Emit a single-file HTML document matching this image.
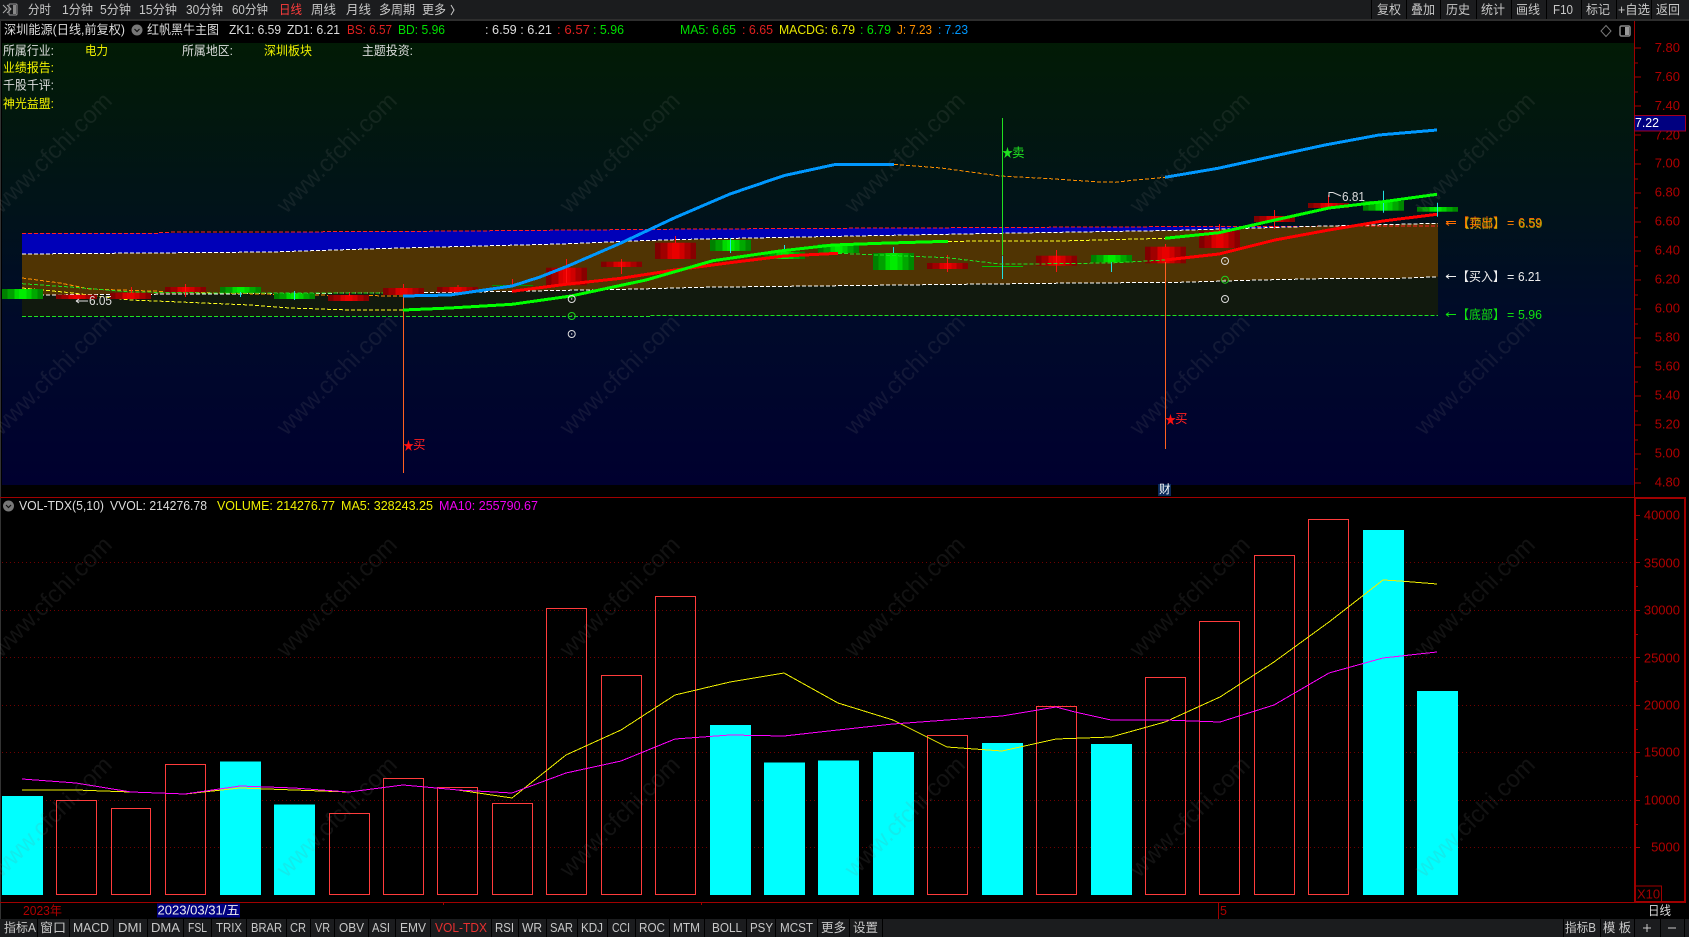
<!DOCTYPE html>
<html><head><meta charset="utf-8"><style>
html,body{margin:0;padding:0;background:#000;width:1689px;height:937px;overflow:hidden}
svg{display:block}
text{font-family:"Liberation Sans","Noto Sans CJK SC",sans-serif;font-size:12.5px;dominant-baseline:central;fill:#ddd}
.t{fill:#c8c8c8}
.ax{fill:#b00000;font-size:13px;text-anchor:end}
.wm{font-size:24px;fill:#808080;opacity:.14;text-anchor:middle}
.th{fill:none;stroke-width:3;shape-rendering:crispEdges}
.d{fill:none;stroke-width:1;stroke-dasharray:4 2;shape-rendering:crispEdges}
.g{stroke:#700000;stroke-width:1;stroke-dasharray:1 3;shape-rendering:crispEdges}
.rb{fill:none;stroke:#ff3c3c;stroke-width:1;shape-rendering:crispEdges}
.cb{fill:#00ffff}
.ma{fill:none;stroke-width:1;shape-rendering:crispEdges}
</style></head><body>
<svg width="1689" height="937" viewBox="0 0 1689 937" xmlns="http://www.w3.org/2000/svg">
<defs>
<linearGradient id="bg" x1="0" y1="0" x2="0" y2="1">
<stop offset="0" stop-color="#021b05"/><stop offset=".38" stop-color="#01131a"/><stop offset=".63" stop-color="#000a2a"/><stop offset="1" stop-color="#00002f"/>
</linearGradient>
<linearGradient id="r"><stop offset="0" stop-color="#800000"/><stop offset=".14" stop-color="#800000"/><stop offset=".14" stop-color="#a00000"/><stop offset=".3" stop-color="#a00000"/><stop offset=".3" stop-color="#d80000"/><stop offset=".42" stop-color="#d80000"/><stop offset=".42" stop-color="#e80000"/><stop offset=".6" stop-color="#e80000"/><stop offset=".6" stop-color="#d00000"/><stop offset=".72" stop-color="#d00000"/><stop offset=".72" stop-color="#a80000"/><stop offset=".86" stop-color="#a80000"/><stop offset=".86" stop-color="#880000"/><stop offset="1" stop-color="#880000"/></linearGradient>
<linearGradient id="v"><stop offset="0" stop-color="#008000"/><stop offset=".14" stop-color="#008000"/><stop offset=".14" stop-color="#00a000"/><stop offset=".3" stop-color="#00a000"/><stop offset=".3" stop-color="#00d800"/><stop offset=".42" stop-color="#00d800"/><stop offset=".42" stop-color="#00ec00"/><stop offset=".6" stop-color="#00ec00"/><stop offset=".6" stop-color="#00d000"/><stop offset=".72" stop-color="#00d000"/><stop offset=".72" stop-color="#00a800"/><stop offset=".86" stop-color="#00a800"/><stop offset=".86" stop-color="#008800"/><stop offset="1" stop-color="#008800"/></linearGradient>
</defs>
<rect width="1689" height="937" fill="#000"/>
<!-- top toolbar -->
<rect width="1689" height="19" fill="#1b1c1e"/>
<rect y="19" width="1689" height="2" fill="#2e2e2e"/>
<path d="M3 5l4 4-4 4M7 5l4 4-4 4" fill="none" stroke="#aaa" stroke-width="1"/>
<rect x="9" y="4" width="8" height="11" rx="1" fill="none" stroke="#999"/><rect x="13" y="5" width="3" height="9" fill="#888"/>
<text class="t" x="28" y="10" textLength="23" lengthAdjust="spacingAndGlyphs">分时</text>
<text class="t" x="62" y="10" textLength="31" lengthAdjust="spacingAndGlyphs">1分钟</text>
<text class="t" x="100" y="10" textLength="31" lengthAdjust="spacingAndGlyphs">5分钟</text>
<text class="t" x="139" y="10" textLength="38" lengthAdjust="spacingAndGlyphs">15分钟</text>
<text class="t" x="186" y="10" textLength="37" lengthAdjust="spacingAndGlyphs">30分钟</text>
<text class="t" x="232" y="10" textLength="36" lengthAdjust="spacingAndGlyphs">60分钟</text>
<text x="279" y="10" textLength="23" lengthAdjust="spacingAndGlyphs" style="fill:#ff3c3c">日线</text>
<text class="t" x="311" y="10" textLength="25" lengthAdjust="spacingAndGlyphs">周线</text>
<text class="t" x="346" y="10" textLength="25" lengthAdjust="spacingAndGlyphs">月线</text>
<text class="t" x="379" y="10" textLength="36" lengthAdjust="spacingAndGlyphs">多周期</text>
<text class="t" x="422" y="10" textLength="24" lengthAdjust="spacingAndGlyphs">更多</text>
<path d="M451 5l3 5-3 5" fill="none" stroke="#c8c8c8"/>
<g stroke="#000" stroke-width="1"><path d="M1371.500 0V19M1406.500 0V19M1440.500 0V19M1476.500 0V19M1511.500 0V19M1546.500 0V19M1581.500 0V19M1616.500 0V19M1651.500 0V19"/></g>
<text class="t" x="1377" y="10" textLength="24" lengthAdjust="spacingAndGlyphs">复权</text>
<text class="t" x="1411" y="10" textLength="24" lengthAdjust="spacingAndGlyphs">叠加</text>
<text class="t" x="1446" y="10" textLength="24" lengthAdjust="spacingAndGlyphs">历史</text>
<text class="t" x="1481" y="10" textLength="24" lengthAdjust="spacingAndGlyphs">统计</text>
<text class="t" x="1516" y="10" textLength="24" lengthAdjust="spacingAndGlyphs">画线</text>
<text class="t" x="1553" y="10" textLength="20" lengthAdjust="spacingAndGlyphs">F10</text>
<text class="t" x="1586" y="10" textLength="24" lengthAdjust="spacingAndGlyphs">标记</text>
<text class="t" x="1618" y="10" textLength="32" lengthAdjust="spacingAndGlyphs">+自选</text>
<text class="t" x="1656" y="10" textLength="24" lengthAdjust="spacingAndGlyphs">返回</text>
<!-- header -->
<text x="4" y="30" textLength="121" lengthAdjust="spacingAndGlyphs">深圳能源(日线,前复权)</text>
<circle cx="137" cy="30" r="5.500" fill="#777"/><path d="M134.500 29l2.500 2.500 2.500-2.500" fill="none" stroke="#111" stroke-width="1.200"/>
<text x="147" y="30" textLength="72" lengthAdjust="spacingAndGlyphs">红帆黑牛主图</text>
<text x="229" y="30" textLength="52" lengthAdjust="spacingAndGlyphs">ZK1: 6.59</text>
<text x="287" y="30" textLength="53" lengthAdjust="spacingAndGlyphs">ZD1: 6.21</text>
<text x="347" y="30" textLength="45" lengthAdjust="spacingAndGlyphs" style="fill:#e02020">BS: 6.57</text>
<text x="398" y="30" textLength="47" lengthAdjust="spacingAndGlyphs" style="fill:#00e000">BD: 5.96</text>
<text x="485" y="30" textLength="67" lengthAdjust="spacingAndGlyphs">: 6.59 : 6.21</text>
<text x="557" y="30" textLength="33" lengthAdjust="spacingAndGlyphs" style="fill:#e02020">: 6.57</text>
<text x="593" y="30" textLength="31" lengthAdjust="spacingAndGlyphs" style="fill:#00e000">: 5.96</text>
<text x="680" y="30" textLength="56" lengthAdjust="spacingAndGlyphs" style="fill:#00e000">MA5: 6.65</text>
<text x="742" y="30" textLength="31" lengthAdjust="spacingAndGlyphs" style="fill:#e02020">: 6.65</text>
<text x="779" y="30" textLength="76" lengthAdjust="spacingAndGlyphs" style="fill:#e8e800">MACDG: 6.79</text>
<text x="860" y="30" textLength="31" lengthAdjust="spacingAndGlyphs" style="fill:#00e000">: 6.79</text>
<text x="897" y="30" textLength="35" lengthAdjust="spacingAndGlyphs" style="fill:#ff9000">J: 7.23</text>
<text x="938" y="30" textLength="30" lengthAdjust="spacingAndGlyphs" style="fill:#0098ff">: 7.23</text>
<path d="M1606 25.500l5 5.500-5 5.500-5-5.500z" fill="none" stroke="#777"/>
<rect x="1620" y="26" width="10" height="10" rx="1.500" fill="none" stroke="#888" stroke-width="1.500"/><rect x="1625" y="27" width="4" height="8" fill="#999"/>
<!-- main bg -->
<rect x="2" y="43" width="1632" height="442" fill="url(#bg)"/>
<rect x="0" y="21" width="1" height="916" fill="#333"/>
<!-- zones -->
<polygon fill="#11190e" points="22,295 433,292.700 640,289 700,287.300 1050,283.300 1180,282.300 1260,280 1340,278.300 1400,278.300 1438,276.700 1438,315.300 22,316.700"/>
<polygon fill="#503403" points="22,254 270,252 400,248 560,244 640,240.700 700,239 870,235.700 1000,233.300 1180,230.300 1300,226.700 1438,223.300 1438,276.700 1400,278.300 1340,278.300 1260,280 1180,282.300 1050,283.300 700,287.300 640,289 433,292.700 22,295"/>
<polygon fill="#0000b8" points="22,233.300 270,233 400,231 700,229 1000,227.500 1200,226.500 1300,226 1300,226.700 1180,230.300 1000,233.300 870,235.700 700,239 640,240.700 560,244 400,248 270,252 22,254"/>
<polyline class="d" stroke="#ff2020" points="22,233.300 158,233.300 158,232.300 400,231.500 700,229 1000,227.500 1200,226.500 1438,226"/>
<polyline class="d" stroke="#fff" points="22,254 270,252 400,248 560,244 640,240.700 700,239 870,235.700 1000,233.300 1180,230.300 1300,226.700 1438,223.300"/>
<polyline class="d" stroke="#fff" points="22,295 433,292.700 640,289 700,287.300 1050,283.300 1180,282.300 1260,280 1340,278.300 1400,278.300 1438,276.700"/>
<polyline class="d" stroke="#20e020" points="22,316.700 650,316.700 650,315.300 1438,315.300"/>
<!-- left dashed -->
<polyline class="d" stroke="#ff9000" points="22,278 60,283 90,289 180,292 300,295 403,296"/>
<polyline class="d" stroke="#20e020" points="22,283.700 70,287 130,292 220,293 403,293"/>
<polyline class="d" stroke="#ffff20" points="22,288 70,292.700 130,300 180,302 250,305 290,308 350,310 403,310"/>
<!-- candles -->
<g fill="url(#r)">
<rect x="56" y="294.700" width="41" height="4.300"/><rect x="110" y="292.700" width="41" height="6.300"/><rect x="165" y="287" width="41" height="5"/><rect x="328" y="295" width="41" height="6"/><rect x="383" y="288" width="41" height="7"/><rect x="437" y="287" width="41" height="5.300"/>
<rect x="546" y="267.700" width="41" height="17.600"/><rect x="601" y="261.700" width="41" height="5.300"/><rect x="655" y="242.700" width="41" height="16.300"/>
<rect x="927" y="263" width="41" height="6"/><rect x="1036" y="255.700" width="41" height="10"/><rect x="1145" y="246.700" width="41" height="16.600"/><rect x="1199" y="230.700" width="41" height="17.300"/><rect x="1254" y="216" width="41" height="6"/><rect x="1308" y="203" width="41" height="5"/>
</g>
<g fill="url(#v)">
<rect x="2" y="289" width="41" height="10"/><rect x="220" y="287" width="41" height="5.700"/><rect x="274" y="293.300" width="41" height="5.700"/>
<rect x="710" y="240" width="41" height="11"/><rect x="764" y="251.700" width="41" height="7.300"/><rect x="818" y="244" width="41" height="9"/><rect x="873" y="253" width="41" height="17"/><rect x="1091" y="255" width="41" height="7.300"/><rect x="1363" y="201" width="41" height="9.700"/><rect x="1417" y="207" width="41" height="4.700"/>
</g>
<rect x="492" y="285" width="41" height="1" fill="#009000"/><rect x="982" y="266" width="41" height="1" fill="#00c000"/>
<g stroke="#ff1010" stroke-width="1">
<path d="M131.500 287V293M185.500 284V297M349.500 293V296M403.500 284V288M458 285V287M512.500 279V285M566.500 259V285M621.500 259V274M675.500 236V243M947.500 255V272M1056.500 250V272M1165.500 244V247M1219.500 224V231M1274.500 210V229M1328.500 195V208"/>
</g>
<g stroke="#20e0e0" stroke-width="1">
<path d="M240.500 292V297M294.500 291V300M730.500 238V253M784.500 245V252M893.500 247V253M1002.500 255.700V279M1111.500 262V272M1383.500 190.700V212.700M1437.500 202.700V216.700"/>
</g>
<!-- thin dashed connectors -->
<polyline class="d" stroke="#ff9000" points="894,164.300 941,168 1000,176 1050,178.700 1095,181.700 1115,182.300 1135,180 1165,177.300"/>
<polyline class="d" stroke="#ffff20" points="948,241.300 1060,241 1165,238.300"/>
<polyline class="d" stroke="#20e020" points="838,253.300 947,257.700 1000,264 1056,263.700 1110,263 1165,260"/>
<!-- signal lines -->
<path d="M403.500 296V473M1165.500 262V449" stroke="#ff6020" stroke-width="1" fill="none"/>
<path d="M1002.500 118V255" stroke="#20e020" stroke-width="1" fill="none"/>
<!-- thick lines -->
<polyline class="th" stroke="#0098ff" points="403,296 450,295 512,286 540,277 568,266 621,243 675,217.600 730,194 784,175.600 836,164.300 894,164.300"/>
<polyline class="th" stroke="#0098ff" points="1165,177.300 1218,168.300 1271,156.700 1325,145 1379,135 1437,130"/>
<polyline class="th" stroke="#ff0000" points="512,291.300 566,284.300 621,278.300 675,270 730,262.700 784,256 838,253.300"/>
<polyline class="th" stroke="#00ff00" points="403,310 450,308 512,304.300 571,296 646,280 713,260.700 780,251 833,245 880,243.300 948,241.300"/>
<polyline class="th" stroke="#ff0000" points="1165,260 1219,254 1275,240 1329,230 1383,221 1437,214.300"/>
<polyline class="th" stroke="#00ff00" points="1165,238.300 1219,232.700 1275,220 1329,208 1383,201.700 1437,194.300"/>
<!-- circles -->
<g fill="none" stroke-width="1">
<circle cx="571.700" cy="299" r="3.500" stroke="#ddd"/><circle cx="571.700" cy="316" r="3.500" stroke="#20d020"/><circle cx="571.700" cy="334" r="3.500" stroke="#ddd"/>
<circle cx="1225" cy="261" r="3.500" stroke="#ddd"/><circle cx="1225" cy="279.700" r="3.500" stroke="#20d020"/><circle cx="1225" cy="299" r="3.500" stroke="#ddd"/>
</g>
<g fill="#ddd"><circle cx="571.700" cy="299" r=".7"/><circle cx="571.700" cy="334" r=".7"/><circle cx="1225" cy="261" r=".7"/><circle cx="1225" cy="299" r=".7"/><circle cx="571.700" cy="316" r=".7" style="fill:#20d020"/><circle cx="1225" cy="279.700" r=".7" style="fill:#20d020"/></g>
<!-- labels in chart -->
<path d="M76 301H88M76 301l3-2M76 301l3 2" fill="none" stroke="#ddd"/>
<text x="89" y="301" textLength="23" lengthAdjust="spacingAndGlyphs">6.05</text>
<path d="M1329 197V192.500H1333L1341 196" fill="none" stroke="#ddd"/>
<text x="1342" y="197" textLength="23" lengthAdjust="spacingAndGlyphs">6.81</text>
<text x="403" y="446" textLength="11" lengthAdjust="spacingAndGlyphs" style="fill:#ff1010">★</text>
<text x="413" y="445" style="fill:#ff2020;font-size:12.500px">买</text>
<text x="1165" y="420" textLength="11" lengthAdjust="spacingAndGlyphs" style="fill:#ff1010">★</text>
<text x="1175" y="419" style="fill:#ff2020;font-size:12.500px">买</text>
<text x="1002" y="153" textLength="11" lengthAdjust="spacingAndGlyphs" style="fill:#20e020">★</text>
<text x="1012" y="153" style="fill:#20e020;font-size:12.500px">卖</text>
<!-- right zone labels -->
<path d="M1446 223.500H1456M1446 223.500l3-2M1446 223.500l3 2M1446 221.500H1456" fill="none" stroke="#ff7000"/>
<text x="1457" y="223" textLength="48" lengthAdjust="spacingAndGlyphs" style="fill:#ff5a00">【卖出】</text>
<text x="1458" y="224" textLength="47" lengthAdjust="spacingAndGlyphs" style="fill:#e0c000;opacity:.75">【顶部】</text>
<text x="1507" y="223" style="fill:#ff8000">=</text>
<text x="1518" y="223" textLength="24" lengthAdjust="spacingAndGlyphs" style="fill:#ff6000">6.59</text>
<text x="1518.500" y="224" textLength="24" lengthAdjust="spacingAndGlyphs" style="fill:#d0d000;opacity:.7">6.59</text>
<path d="M1446 276.500H1456M1446 276.500l3-2M1446 276.500l3 2" fill="none" stroke="#eee"/>
<text x="1457" y="277" textLength="48" lengthAdjust="spacingAndGlyphs" style="fill:#eee">【买入】</text>
<text x="1507" y="277" style="fill:#eee">=</text>
<text x="1518" y="277" textLength="23" lengthAdjust="spacingAndGlyphs" style="fill:#eee">6.21</text>
<path d="M1446 314.500H1456M1446 314.500l3-2M1446 314.500l3 2" fill="none" stroke="#10e010"/>
<text x="1457" y="315" textLength="48" lengthAdjust="spacingAndGlyphs" style="fill:#10e010">【底部】</text>
<text x="1507" y="315" style="fill:#10e010">=</text>
<text x="1518" y="315" textLength="24" lengthAdjust="spacingAndGlyphs" style="fill:#10e010">5.96</text>
<!-- info rows -->
<text x="3" y="51" textLength="51" lengthAdjust="spacingAndGlyphs">所属行业:</text>
<text x="85" y="51" textLength="23" lengthAdjust="spacingAndGlyphs" style="fill:#f0f000">电力</text>
<text x="182" y="51" textLength="51" lengthAdjust="spacingAndGlyphs">所属地区:</text>
<text x="264" y="51" textLength="48" lengthAdjust="spacingAndGlyphs" style="fill:#f0f000">深圳板块</text>
<text x="362" y="51" textLength="51" lengthAdjust="spacingAndGlyphs">主题投资:</text>
<text x="3" y="68" textLength="51" lengthAdjust="spacingAndGlyphs" style="fill:#f0f000">业绩报告:</text>
<text x="3" y="85.500" textLength="51" lengthAdjust="spacingAndGlyphs">千股千评:</text>
<text x="3" y="104" textLength="51" lengthAdjust="spacingAndGlyphs" style="fill:#f0f000">神光益盟:</text>
<!-- right axis main -->
<rect x="1634" y="21" width="1" height="477" fill="#a00000"/>
<g stroke="#a00000" stroke-width="1"><path d="M1635 48h6M1635 63h3M1635 77h6M1635 92h3M1635 106h6M1635 135h6M1635 150h3M1635 164h6M1635 179h3M1635 193h6M1635 208h3M1635 222h6M1635 237h3M1635 251h6M1635 266h3M1635 280h6M1635 295h3M1635 309h6M1635 324h3M1635 338h6M1635 353h3M1635 367h6M1635 382h3M1635 396h6M1635 411h3M1635 425h6M1635 440h3M1635 454h6M1635 469h3M1635 483h6"/></g>
<text class="ax" x="1680" y="47.500">7.80</text><text class="ax" x="1680" y="76.500">7.60</text><text class="ax" x="1680" y="105.500">7.40</text><text class="ax" x="1680" y="135">7.20</text><text class="ax" x="1680" y="163">7.00</text><text class="ax" x="1680" y="192">6.80</text><text class="ax" x="1680" y="221">6.60</text><text class="ax" x="1680" y="250">6.40</text><text class="ax" x="1680" y="279">6.20</text><text class="ax" x="1680" y="308">6.00</text><text class="ax" x="1680" y="337">5.80</text><text class="ax" x="1680" y="366">5.60</text><text class="ax" x="1680" y="395">5.40</text><text class="ax" x="1680" y="424">5.20</text><text class="ax" x="1680" y="453">5.00</text><text class="ax" x="1680" y="482">4.80</text>
<rect x="1634.500" y="115.500" width="51" height="15.500" fill="#000080" stroke="#a00020"/>
<text x="1635" y="123" textLength="24" lengthAdjust="spacingAndGlyphs" style="fill:#fff">7.22</text>
<!-- 财 -->
<rect x="1158" y="484" width="13" height="12" fill="#0a2a5a"/>
<text x="1159" y="490" style="fill:#fff;font-size:11.500px">财</text>
<!-- vol panel -->
<rect x="0" y="497" width="1635" height="1" fill="#a00000"/>
<g class="g"><path d="M2 562.500H1634M2 610.500H1634M2 657.500H1634M2 705.500H1634M2 752.500H1634M2 800.500H1634M2 847.500H1634"/></g>
<circle cx="8.500" cy="506" r="5.500" fill="#777"/><path d="M6 505l2.500 2.500 2.500-2.500" fill="none" stroke="#111" stroke-width="1.200"/>
<text x="19" y="506" textLength="85" lengthAdjust="spacingAndGlyphs">VOL-TDX(5,10)</text>
<text x="110" y="506" textLength="97" lengthAdjust="spacingAndGlyphs">VVOL: 214276.78</text>
<text x="217" y="506" textLength="118" lengthAdjust="spacingAndGlyphs" style="fill:#f0f000">VOLUME: 214276.77</text>
<text x="341" y="506" textLength="92" lengthAdjust="spacingAndGlyphs" style="fill:#f0f000">MA5: 328243.25</text>
<text x="439" y="506" textLength="99" lengthAdjust="spacingAndGlyphs" style="fill:#f000f0">MA10: 255790.67</text>
<!-- vol bars -->
<rect class="cb" x="2" y="796" width="41" height="99"/>
<rect class="rb" x="56.500" y="800.500" width="40" height="94"/>
<rect class="rb" x="111.500" y="808.500" width="39" height="86"/>
<rect class="rb" x="165.500" y="764.500" width="40" height="130"/>
<rect class="cb" x="220" y="761.500" width="41" height="133.500"/>
<rect class="cb" x="274" y="804.500" width="41" height="90.500"/>
<rect class="rb" x="329.500" y="813.500" width="40" height="81"/>
<rect class="rb" x="383.500" y="778.500" width="40" height="116"/>
<rect class="rb" x="437.500" y="787.500" width="40" height="107"/>
<rect class="rb" x="492.500" y="803.500" width="40" height="91"/>
<rect class="rb" x="546.500" y="608.500" width="40" height="286"/>
<rect class="rb" x="601.500" y="675.500" width="40" height="219"/>
<rect class="rb" x="655.500" y="596.500" width="40" height="298"/>
<rect class="cb" x="710" y="725" width="41" height="170"/>
<rect class="cb" x="764" y="762.500" width="41" height="132.500"/>
<rect class="cb" x="818" y="760.500" width="41" height="134.500"/>
<rect class="cb" x="873" y="752" width="41" height="143"/>
<rect class="rb" x="927.500" y="735.500" width="40" height="159"/>
<rect class="cb" x="982" y="743" width="41" height="152"/>
<rect class="rb" x="1036.500" y="706.500" width="40" height="188"/>
<rect class="cb" x="1091" y="744" width="41" height="151"/>
<rect class="rb" x="1145.500" y="677.500" width="40" height="217"/>
<rect class="rb" x="1199.500" y="621.500" width="40" height="273"/>
<rect class="rb" x="1254.500" y="555.500" width="40" height="339"/>
<rect class="rb" x="1308.500" y="519.500" width="40" height="375"/>
<rect class="cb" x="1363" y="530" width="41" height="365"/>
<rect class="cb" x="1417" y="691" width="41" height="204"/>
<!-- MA lines -->
<polyline class="ma" stroke="#f0f000" points="22,790 76,790 131,792 185,794 240,788 294,790 349,792 403,785 458,790 512,798 566,755 621,730 675,695 730,682 784,673 838,703 893,720 947,747 1002,751 1056,739 1111,737 1165,722 1220,697 1274,662 1329,622 1383,580 1400,581 1437,584"/>
<polyline class="ma" stroke="#ff00ff" points="22,779 76,783 131,792 185,794 240,786 294,788 349,792 403,785 458,790 512,793 566,773 621,761 675,739 730,735 784,736 838,730 893,724 947,720 1002,716 1056,707 1075,712 1111,720 1165,720 1220,722 1274,705 1329,673 1383,658 1437,652"/>
<!-- vol axis -->
<rect x="1635" y="498" width="50" height="404" fill="none" stroke="#a00000" stroke-width="2"/>
<g stroke="#a00000"><path d="M1636 515.500h4M1636 539.500h2M1636 562.500h4M1636 586.500h2M1636 610.500h4M1636 634.500h2M1636 657.500h4M1636 681.500h2M1636 705.500h4M1636 729.500h2M1636 752.500h4M1636 776.500h2M1636 800.500h4M1636 824.500h2M1636 847.500h4"/></g>
<text class="ax" x="1680" y="515">40000</text><text class="ax" x="1680" y="563">35000</text><text class="ax" x="1680" y="610">30000</text><text class="ax" x="1680" y="658">25000</text><text class="ax" x="1680" y="705">20000</text><text class="ax" x="1680" y="752">15000</text><text class="ax" x="1680" y="800">10000</text><text class="ax" x="1680" y="847">5000</text>
<rect x="1635.500" y="886" width="26" height="16" fill="none" stroke="#a00000"/>
<text x="1637" y="894" style="fill:#a00000;font-size:13px">X10</text>
<!-- watermark -->
<g>
<text class="wm" transform="translate(52,153) rotate(-45)">www.cfchi.com</text><text class="wm" transform="translate(337,153) rotate(-45)">www.cfchi.com</text><text class="wm" transform="translate(620,153) rotate(-45)">www.cfchi.com</text><text class="wm" transform="translate(905,153) rotate(-45)">www.cfchi.com</text><text class="wm" transform="translate(1190,153) rotate(-45)">www.cfchi.com</text><text class="wm" transform="translate(1475,153) rotate(-45)">www.cfchi.com</text>
<text class="wm" transform="translate(52,375) rotate(-45)">www.cfchi.com</text><text class="wm" transform="translate(337,375) rotate(-45)">www.cfchi.com</text><text class="wm" transform="translate(620,375) rotate(-45)">www.cfchi.com</text><text class="wm" transform="translate(905,375) rotate(-45)">www.cfchi.com</text><text class="wm" transform="translate(1190,375) rotate(-45)">www.cfchi.com</text><text class="wm" transform="translate(1475,375) rotate(-45)">www.cfchi.com</text>
<text class="wm" transform="translate(52,597) rotate(-45)">www.cfchi.com</text><text class="wm" transform="translate(337,597) rotate(-45)">www.cfchi.com</text><text class="wm" transform="translate(620,597) rotate(-45)">www.cfchi.com</text><text class="wm" transform="translate(905,597) rotate(-45)">www.cfchi.com</text><text class="wm" transform="translate(1190,597) rotate(-45)">www.cfchi.com</text><text class="wm" transform="translate(1475,597) rotate(-45)">www.cfchi.com</text>
<text class="wm" transform="translate(52,817) rotate(-45)">www.cfchi.com</text><text class="wm" transform="translate(337,817) rotate(-45)">www.cfchi.com</text><text class="wm" transform="translate(620,817) rotate(-45)">www.cfchi.com</text><text class="wm" transform="translate(905,817) rotate(-45)">www.cfchi.com</text><text class="wm" transform="translate(1190,817) rotate(-45)">www.cfchi.com</text><text class="wm" transform="translate(1475,817) rotate(-45)">www.cfchi.com</text>
</g>
<!-- date row -->
<rect x="0" y="902" width="1635" height="1" fill="#a00000"/>
<text x="23" y="911" textLength="39" lengthAdjust="spacingAndGlyphs" style="fill:#b00000">2023年</text>
<rect x="157" y="903.500" width="83" height="14" fill="#000080"/>
<text x="157.500" y="910.500" textLength="82" lengthAdjust="spacingAndGlyphs" style="fill:#eee">2023/03/31/五</text>
<path d="M1218.500 902V919" stroke="#a00000"/>
<text x="1220" y="911" style="fill:#b00000">5</text>
<path d="M443.500 903v2M701.500 903v2" stroke="#a00000"/>
<text x="1648" y="911" textLength="23" lengthAdjust="spacingAndGlyphs">日线</text>
<!-- bottom bar -->
<rect x="0" y="919" width="1689" height="18" fill="#1b1c1e"/>
<path d="M37.500 919V937M69.500 919V937M113.500 919V937M147.500 919V937M183.500 919V937M211.500 919V937M246.500 919V937M286.500 919V937M310.500 919V937M334.500 919V937M368.500 919V937M395.500 919V937M430.500 919V937M491.500 919V937M518.500 919V937M546.500 919V937M577.500 919V937M607.500 919V937M635.500 919V937M669.500 919V937M704.500 919V937M746.500 919V937M775.500 919V937M817.500 919V937M849.500 919V937M882.500 919V937M1563.500 919V937M1600.500 919V937M1634.500 919V937M1660.500 919V937M1684.500 919V937" stroke="#000" stroke-width="1"/>
<text class="t" x="4" y="928" textLength="32" lengthAdjust="spacingAndGlyphs">指标A</text>
<text class="t" x="40" y="928" textLength="26" lengthAdjust="spacingAndGlyphs">窗口</text>
<text class="t" x="73" y="928" textLength="36" lengthAdjust="spacingAndGlyphs">MACD</text>
<text class="t" x="118" y="928" textLength="24" lengthAdjust="spacingAndGlyphs">DMI</text>
<text class="t" x="151" y="928" textLength="29" lengthAdjust="spacingAndGlyphs">DMA</text>
<text class="t" x="188" y="928" textLength="19" lengthAdjust="spacingAndGlyphs">FSL</text>
<text class="t" x="216" y="928" textLength="26" lengthAdjust="spacingAndGlyphs">TRIX</text>
<text class="t" x="251" y="928" textLength="31" lengthAdjust="spacingAndGlyphs">BRAR</text>
<text class="t" x="290" y="928" textLength="16" lengthAdjust="spacingAndGlyphs">CR</text>
<text class="t" x="315" y="928" textLength="15" lengthAdjust="spacingAndGlyphs">VR</text>
<text class="t" x="339" y="928" textLength="25" lengthAdjust="spacingAndGlyphs">OBV</text>
<text class="t" x="372" y="928" textLength="18" lengthAdjust="spacingAndGlyphs">ASI</text>
<text class="t" x="400" y="928" textLength="26" lengthAdjust="spacingAndGlyphs">EMV</text>
<text x="435" y="928" textLength="52" lengthAdjust="spacingAndGlyphs" style="fill:#e83030">VOL-TDX</text>
<text class="t" x="495" y="928" textLength="19" lengthAdjust="spacingAndGlyphs">RSI</text>
<text class="t" x="522" y="928" textLength="20" lengthAdjust="spacingAndGlyphs">WR</text>
<text class="t" x="550" y="928" textLength="23" lengthAdjust="spacingAndGlyphs">SAR</text>
<text class="t" x="581" y="928" textLength="22" lengthAdjust="spacingAndGlyphs">KDJ</text>
<text class="t" x="612" y="928" textLength="18" lengthAdjust="spacingAndGlyphs">CCI</text>
<text class="t" x="639" y="928" textLength="26" lengthAdjust="spacingAndGlyphs">ROC</text>
<text class="t" x="673" y="928" textLength="27" lengthAdjust="spacingAndGlyphs">MTM</text>
<text class="t" x="712" y="928" textLength="30" lengthAdjust="spacingAndGlyphs">BOLL</text>
<text class="t" x="750" y="928" textLength="23" lengthAdjust="spacingAndGlyphs">PSY</text>
<text class="t" x="780" y="928" textLength="33" lengthAdjust="spacingAndGlyphs">MCST</text>
<text class="t" x="821" y="928" textLength="25" lengthAdjust="spacingAndGlyphs">更多</text>
<text class="t" x="853" y="928" textLength="25" lengthAdjust="spacingAndGlyphs">设置</text>
<text class="t" x="1565" y="928" textLength="31" lengthAdjust="spacingAndGlyphs">指标B</text>
<text class="t" x="1603" y="928" textLength="28" lengthAdjust="spacingAndGlyphs">模 板</text>
<path d="M1643 928h8M1647 924v8M1668 928h8" stroke="#c8c8c8" stroke-width="1" fill="none"/>
</svg>
</body></html>
